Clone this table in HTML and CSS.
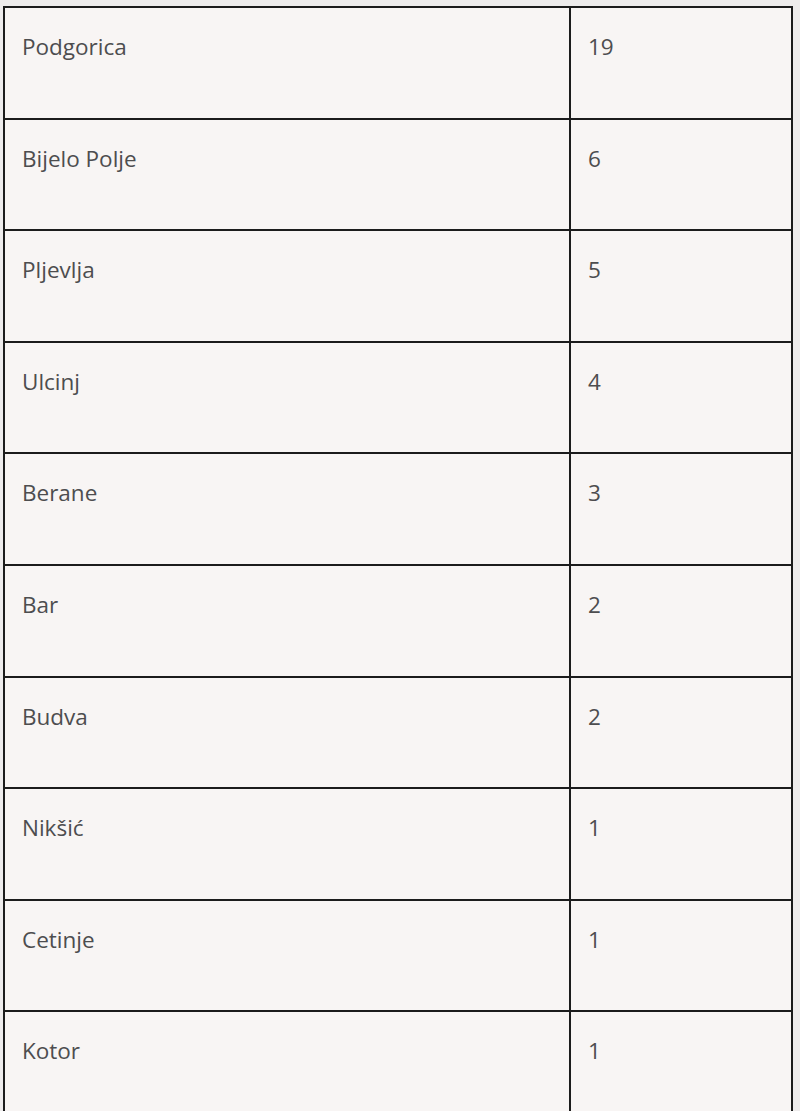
FILE: index.html
```html
<!DOCTYPE html>
<html lang="sr">
<head>
<meta charset="utf-8">
<link rel="stylesheet" href="styles.css">
</head>
<body>
<table class="stats">
  <tbody>
    <tr><td class="name">Podgorica</td><td class="num">19</td></tr>
    <tr><td class="name">Bijelo Polje</td><td class="num">6</td></tr>
    <tr><td class="name">Pljevlja</td><td class="num">5</td></tr>
    <tr><td class="name">Ulcinj</td><td class="num">4</td></tr>
    <tr><td class="name">Berane</td><td class="num">3</td></tr>
    <tr><td class="name">Bar</td><td class="num">2</td></tr>
    <tr><td class="name">Budva</td><td class="num">2</td></tr>
    <tr><td class="name">Nikšić</td><td class="num">1</td></tr>
    <tr><td class="name">Cetinje</td><td class="num">1</td></tr>
    <tr><td class="name">Kotor</td><td class="num">1</td></tr>
  </tbody>
</table>
</body>
</html>
```
FILE: styles.css
```css
html, body {
  margin: 0;
  padding: 0;
  background: #eeecec;
}
body {
  padding: 6px 0 0 3px;
  font-family: "Open Sans", "DejaVu Sans", sans-serif;
  color: #4d4d4f;
}
.stats {
  border-collapse: collapse;
  width: 790px;
  background: #f8f5f4;
}
.stats td {
  border: 2px solid #1c1c1c;
  height: 111.6px;
  box-sizing: border-box;
  vertical-align: top;
  padding: 25px 0 0 17px;
  font-size: 22.5px;
  line-height: 28px;
}
.stats .name {
  width: 566px;
}
```
